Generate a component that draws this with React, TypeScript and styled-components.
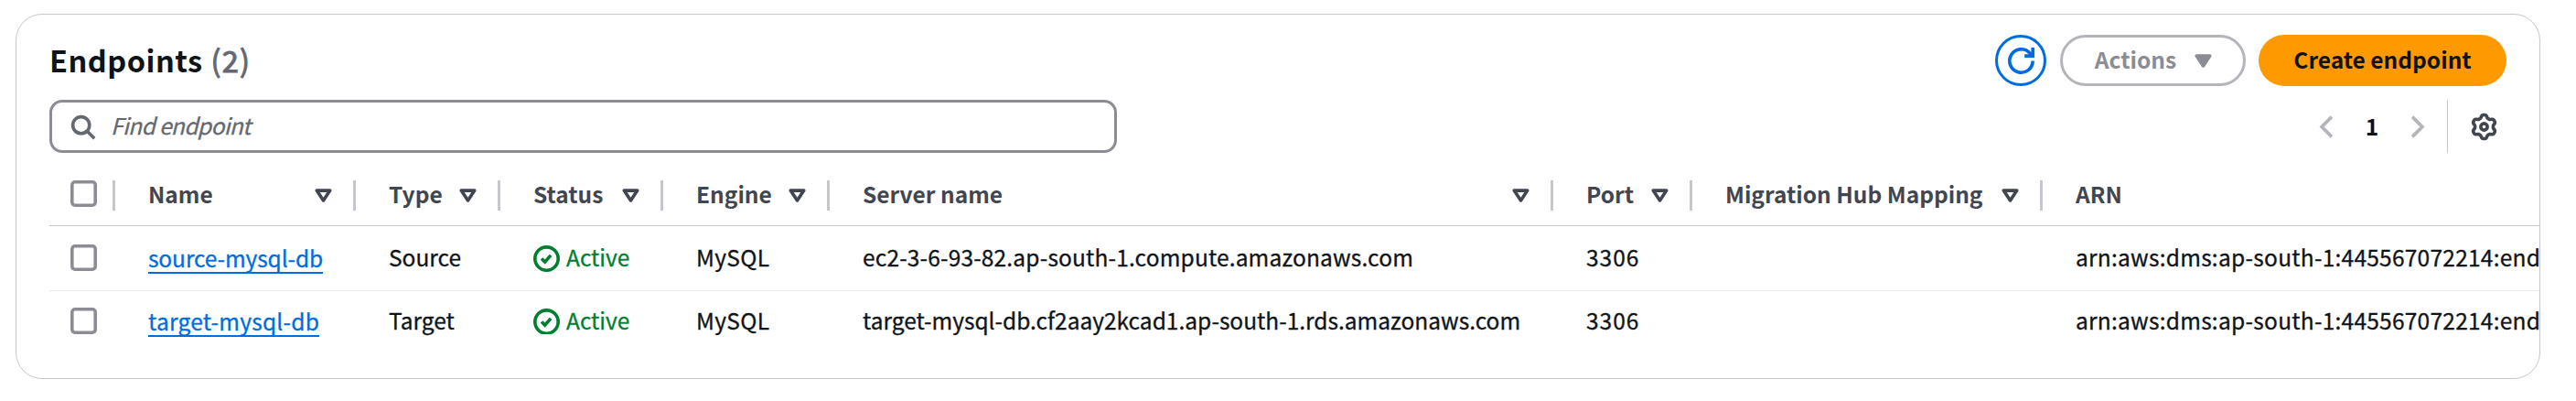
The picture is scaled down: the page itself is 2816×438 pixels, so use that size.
import React from "react";
import styled, { createGlobalStyle } from "styled-components";

const color = {
  text: "#0f141a",
  heading: "#424650",
  muted: "#656871",
  control: "#8c8c94",
  disabled: "#b4b4bb",
  divider: "#c6c6cd",
  rowDivider: "#ebebf0",
  link: "#006ce0",
  success: "#00802f",
  primary: "#ff9900",
};

const Global = createGlobalStyle`
  * { box-sizing: border-box; }
  body {
    margin: 0;
    background: #fff;
    color: ${color.text};
    font: 400 24.5px/36px "Noto Sans CJK SC", "Noto Sans", sans-serif;
  }
`;

const Card = styled.section`
  width: 2760px;
  height: 399px;
  margin: 15px 0 0 17px;
  padding: 22px 0 0 36px;
  border: 1px solid ${color.divider};
  border-radius: 29px;
  overflow: hidden;
`;

const Header = styled.header`
  display: flex;
  align-items: center;
  justify-content: space-between;
  height: 56px;
  padding-right: 36px;
`;

const Title = styled.h2`
  margin: 0;
  padding: 0 0 3px;
  font-size: 32.5px;
  line-height: 48px;
  font-weight: 700;
  letter-spacing: 0.5px;
`;

const Count = styled.span`
  margin-left: 1px;
  color: ${color.muted};
  font-weight: 400;
  letter-spacing: 1.2px;
  -webkit-text-stroke: 1px ${color.muted};
`;

const Actions = styled.div`
  display: flex;
`;

const Button = styled.button<{ $variant: "icon" | "disabled" | "primary" }>`
  display: flex;
  align-items: center;
  justify-content: center;
  gap: 15px;
  height: 56px;
  width: ${p => ({ icon: 56, disabled: 203, primary: 271 })[p.$variant]}px;
  margin-left: ${p => (p.$variant === "disabled" ? 15 : 14)}px;
  padding: 0 0 0 ${p => (p.$variant === "disabled" ? 6 : 0)}px;
  border-radius: 28px;
  border: ${p => (p.$variant === "primary" ? "0" : "3px solid")};
  border-color: ${p => (p.$variant === "icon" ? color.link : color.disabled)};
  background: ${p => (p.$variant === "primary" ? color.primary : "#fff")};
  color: ${p => ({ icon: color.link, disabled: color.control, primary: color.text })[p.$variant]};
  font: inherit;
  font-weight: 700;
`;

const Label = styled.span`
  padding-bottom: 3px;
  white-space: nowrap;
`;

const Toolbar = styled.div`
  display: flex;
  align-items: center;
  justify-content: space-between;
  height: 58px;
  margin-top: 15px;
  padding-right: 36px;
`;

const Search = styled.div`
  display: flex;
  align-items: center;
  gap: 16px;
  width: 1167px;
  height: 58px;
  padding-left: 19px;
  border: 3px solid ${color.control};
  border-radius: 14px;
  color: ${color.muted};
`;

const Placeholder = styled.span`
  padding-bottom: 3px;
  font-style: italic;
  letter-spacing: -0.6px;
  -webkit-text-stroke: 0.3px currentColor;
`;

const Pager = styled.nav`
  display: flex;
  align-items: center;
  height: 58px;
  color: ${color.disabled};
`;

const Page = styled.span`
  width: 70px;
  padding-bottom: 1px;
  text-align: center;
  font-weight: 700;
  color: ${color.text};
`;

const Preferences = styled.div`
  display: flex;
  align-items: center;
  height: 58px;
  margin-left: 18px;
  padding: 0 10px 0 25px;
  border-left: 1px solid ${color.divider};
  color: ${color.heading};
`;

const Glyph = styled.svg`
  display: block;
  flex: none;
  width: 29px;
  height: 29px;
  overflow: visible;
  fill: none;
  stroke: currentColor;
  stroke-width: 2;
`;

const Table = styled.div`
  display: grid;
  grid-template-columns: 72px 263px 158px 178px 182px 791px 152px 383px 600px;
`;

const Row = styled.div<{ $kind: "head" | "body" | "last" }>`
  display: grid;
  grid-template-columns: subgrid;
  grid-column: 1 / -1;
  align-items: center;
  height: ${p => ({ head: 80, body: 71, last: 66 })[p.$kind]}px;
  padding-top: ${p => (p.$kind === "head" ? 13 : 0)}px;
  border-bottom: ${p => (p.$kind === "last" ? 0 : 1)}px solid
    ${p => (p.$kind === "head" ? color.divider : color.rowDivider)};
`;

const HeadCell = styled.div<{ $last?: boolean }>`
  display: flex;
  align-items: center;
  justify-content: space-between;
  height: 33px;
  padding: 0 18px 0 36px;
  border-right: ${p => (p.$last ? 0 : 3)}px solid ${color.divider};
  color: ${color.heading};
  font-weight: 700;
`;

const SelectCell = styled.div<{ $head?: boolean }>`
  display: flex;
  align-items: center;
  height: 33px;
  padding: 0 0 ${p => (p.$head ? 4 : 1)}px 23px;
  border-right: ${p => (p.$head ? 3 : 0)}px solid ${color.divider};
`;

const Checkbox = styled.span`
  width: 29px;
  height: 29px;
  border-radius: 5px;
  box-shadow: inset 0 0 0 3.6px ${color.control};
`;

const Cell = styled.div<{ $tracking?: number }>`
  display: flex;
  padding: 0 0 3px 36px;
  white-space: nowrap;
  letter-spacing: ${p => p.$tracking ?? 0}px;
  -webkit-text-stroke: 0.3px currentColor;
`;

const Link = styled.a`
  height: 35px;
  border-bottom: 2px solid ${color.link};
  margin-bottom: -1px;
  color: ${color.link};
`;

const Status = styled.span`
  display: flex;
  gap: 7px;
  color: ${color.success};
`;

const StatusIcon = styled.span<{ $clipped: boolean }>`
  height: ${p => (p.$clipped ? 28 : 29)}px;
  margin-top: 5px;
  overflow: hidden;
`;

const SortIcon = ({ filled }: { filled?: boolean }) => (
  <Glyph viewBox="0 0 16 16" strokeLinejoin="round">
    <path d="M4 5h8l-4 6-4-6Z" fill={filled ? "currentColor" : "none"} />
  </Glyph>
);

const gearPath = (() => {
  const points: string[] = [];
  for (let deg = 0; deg < 360; deg += 3) {
    const a = (deg * Math.PI) / 180;
    const wave = Math.tanh(1.6 * Math.cos(6 * a) + 0.1) / Math.tanh(1.6);
    const r = 6.3 + 0.85 * wave;
    points.push(`${(8 + r * Math.sin(a)).toFixed(2)} ${(8 - r * Math.cos(a)).toFixed(2)}`);
  }
  return `M${points.join("L")}Z`;
})();

const columns = ["Name", "Type", "Status", "Engine", "Server name", "Port", "Migration Hub Mapping", "ARN"];

const endpoints = [
  {
    name: "source-mysql-db",
    nameTracking: -0.1,
    type: "Source",
    server: "ec2-3-6-93-82.ap-south-1.compute.amazonaws.com",
    serverTracking: 0.16,
    arn: "arn:aws:dms:ap-south-1:445567072214:end",
  },
  {
    name: "target-mysql-db",
    nameTracking: 0.25,
    type: "Target",
    server: "target-mysql-db.cf2aay2kcad1.ap-south-1.rds.amazonaws.com",
    serverTracking: 0,
    arn: "arn:aws:dms:ap-south-1:445567072214:end",
  },
];

export default function App() {
  return (
    <>
      <Global />
      <Card>
        <Header>
          <Title>
            Endpoints <Count>(2)</Count>
          </Title>
          <Actions>
            <Button $variant="icon" aria-label="Refresh">
              <Glyph viewBox="0 0 16 16">
                <path d="M15 8a7 7 0 1 1-1.95-4.85L15 5" />
                <path d="M10 5h5V0" />
              </Glyph>
            </Button>
            <Button $variant="disabled">
              <Label>Actions</Label>
              <SortIcon filled />
            </Button>
            <Button $variant="primary">
              <Label>Create endpoint</Label>
            </Button>
          </Actions>
        </Header>
        <Toolbar>
          <Search>
            <Glyph viewBox="0 0 16 16">
              <circle cx="7" cy="7" r="5" />
              <path d="m15 15-4.5-4.5" />
            </Glyph>
            <Placeholder>Find endpoint</Placeholder>
          </Search>
          <Pager>
            <Glyph viewBox="0 0 16 16">
              <path d="M11 2 5 8l6 6" />
            </Glyph>
            <Page>1</Page>
            <Glyph viewBox="0 0 16 16">
              <path d="m5 2 6 6-6 6" />
            </Glyph>
            <Preferences>
              <Glyph viewBox="0 0 16 16" strokeLinejoin="round">
                <path d={gearPath} />
                <circle cx="8" cy="8" r="2" />
              </Glyph>
            </Preferences>
          </Pager>
        </Toolbar>
        <Table>
          <Row $kind="head">
            <SelectCell $head>
              <Checkbox />
            </SelectCell>
            {columns.map((c, i) => (
              <HeadCell key={c} $last={i === columns.length - 1}>
                <Label>{c}</Label>
                {i < columns.length - 1 && <SortIcon />}
              </HeadCell>
            ))}
          </Row>
          {endpoints.map((e, i) => (
            <Row key={e.name} $kind={i === endpoints.length - 1 ? "last" : "body"}>
              <SelectCell>
                <Checkbox />
              </SelectCell>
              <Cell $tracking={e.nameTracking}>
                <Link>{e.name}</Link>
              </Cell>
              <Cell>{e.type}</Cell>
              <Cell>
                <Status>
                  <StatusIcon $clipped={i === endpoints.length - 1}>
                    <Glyph viewBox="0 0 16 16">
                      <circle cx="8" cy="8" r="7" />
                      <path d="m5 8 2 2 3.52-4" />
                    </Glyph>
                  </StatusIcon>
                  Active
                </Status>
              </Cell>
              <Cell $tracking={0.3}>MySQL</Cell>
              <Cell $tracking={e.serverTracking}>{e.server}</Cell>
              <Cell $tracking={1}>3306</Cell>
              <Cell />
              <Cell $tracking={0.25}>{e.arn}</Cell>
            </Row>
          ))}
        </Table>
      </Card>
    </>
  );
}
